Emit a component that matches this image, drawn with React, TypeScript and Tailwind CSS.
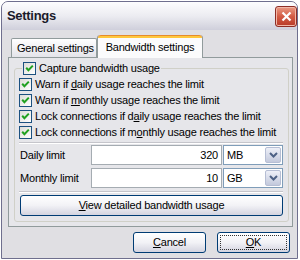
import React from 'react';

// XP-style checkbox (always checked here)
const Check = () => (
  <span className="w-[13px] h-[13px] shrink-0 border border-[#1c5180] bg-gradient-to-br from-[#dcdcd7] to-white flex items-center justify-center">
    <svg width="9" height="9" viewBox="0 0 9 9">
      <path d="M1.2 3.8 L3.4 6.2 L7.8 1.6" stroke="#21a121" strokeWidth="2" fill="none" />
    </svg>
  </span>
);

const CheckRow = ({ children }: { children: React.ReactNode }) => (
  <div className="h-[16px] flex items-center gap-[3px]">
    <Check />
    <span className="leading-[13px]">{children}</span>
  </div>
);

const Combo = ({ value }: { value: string }) => (
  <div className="w-[60px] h-[20px] border border-[#7f9db9] bg-white flex items-center justify-between pl-[3px] pr-[1px]">
    <span>{value}</span>
    <span className="w-[16px] h-[16px] rounded-[2px] border border-[#b6bed4] bg-gradient-to-b from-[#eef0f8] to-[#c3c9dc] flex items-center justify-center">
      <svg width="9" height="6" viewBox="0 0 9 6">
        <path d="M1 1 L4.5 4.5 L8 1" stroke="#4d6185" strokeWidth="2" fill="none" />
      </svg>
    </span>
  </div>
);

const XpButton = ({
  children,
  className = '',
  focused = false,
}: {
  children: React.ReactNode;
  className?: string;
  focused?: boolean;
}) => (
  <button
    type="button"
    className={`h-[21px] rounded-[3px] border border-[#003c74] bg-gradient-to-b from-white via-[#f2f2f6] to-[#d4d4e0] flex items-center justify-center p-[2px] ${className}`}
  >
    <span
      className={`w-full h-full flex items-center justify-center ${focused ? 'border border-dotted border-[#333]' : ''}`}
    >
      {children}
    </span>
  </button>
);

const Separator = () => (
  <div className="mr-[5px] border-t border-[#c5c5cb] border-b border-b-white" />
);

export default function App() {
  return (
    <div className="w-[300px] h-[260px] bg-white pt-[1px] font-['Liberation_Sans',Arial,sans-serif] text-[11px] tracking-[-0.2px] text-black">
      <div className="ml-[1px] w-[297px] h-[258px] flex flex-col rounded-t-[7px] border border-[#6f6f8e] bg-[#e0dfe3] overflow-hidden">
        {/* title bar */}
        <div className="h-[28px] shrink-0 flex items-center justify-between pl-[5px] pr-[0px] bg-gradient-to-b from-[#fdfdfe] via-[#ececf1] to-[#cfcfdb]">
          <span className="text-[13px] font-bold tracking-[-0.3px] text-[#1a1a2a]">Settings</span>
          <span className="w-[22px] h-[21px] rounded-[3px] border border-[#8e2e26] bg-gradient-to-b from-[#e99a84] via-[#d35b44] to-[#b83a28] flex items-center justify-center shadow-[inset_0_0_0_1px_#f2b8a8]">
            <svg width="11" height="11" viewBox="0 0 11 11">
              <path d="M1.5 1.5 L9.5 9.5 M9.5 1.5 L1.5 9.5" stroke="white" strokeWidth="2.2" />
            </svg>
          </span>
        </div>

        {/* client area */}
        <div className="flex-1 flex flex-col pl-[6px] pr-[4px] pt-[5px]">
          {/* tabs */}
          <div className="h-[22px] flex items-end pl-[3px]">
            <div className="w-[86px] h-[19px] rounded-t-[2px] border border-b-0 border-[#919b9c] bg-gradient-to-b from-white to-[#e4e4ea] pl-[5px] flex items-center">
              General settings
            </div>
            <div className="relative z-10 w-[106px] h-[23px] -mb-[1px] rounded-t-[3px] border-x border-[#919b9c] bg-[#fbfbfc] flex flex-col">
              <div className="h-[3px] rounded-t-[3px] bg-[#ffc83c] border-t border-[#e68b2c]" />
              <div className="flex-1 flex items-center justify-center pb-[1px]">Bandwidth settings</div>
            </div>
          </div>

          {/* tab panel */}
          <div className="h-[170px] border border-[#919b9c] bg-[#e6e6ea] pl-[5px] pr-[3px] pt-[2px]">
            <fieldset className="border border-[#d0d0c8] rounded-[3px] pl-[4px] pb-[5px]">
              <legend className="ml-[3px] px-[1px]">
                <CheckRow>Capture bandwidth usage</CheckRow>
              </legend>
              <CheckRow>
                Warn if <u>d</u>aily usage reaches the limit
              </CheckRow>
              <CheckRow>
                Warn if <u>m</u>onthly usage reaches the limit
              </CheckRow>
              <CheckRow>
                Lock connections if d<u>a</u>ily usage reaches the limit
              </CheckRow>
              <CheckRow>
                Lock connections if m<u>o</u>nthly usage reaches the limit
              </CheckRow>

              <div className="mt-[2px]">
                <Separator />
              </div>

              <div className="pl-[1px] mt-[1px] flex flex-col gap-[3px]">
                <div className="flex items-center">
                  <span className="w-[71px]">Daily limit</span>
                  <div className="w-[131px] h-[20px] border border-[#a5acb2] bg-white flex items-center justify-end pr-[3px]">320</div>
                  <div className="ml-[1px]">
                    <Combo value="MB" />
                  </div>
                </div>
                <div className="flex items-center">
                  <span className="w-[71px]">Monthly limit</span>
                  <div className="w-[131px] h-[20px] border border-[#a5acb2] bg-white flex items-center justify-end pr-[3px]">10</div>
                  <div className="ml-[1px]">
                    <Combo value="GB" />
                  </div>
                </div>
              </div>

              <div className="mt-[3px]">
                <Separator />
              </div>

              <div className="pl-[1px] pr-[5px] mt-[2px]">
                <XpButton className="w-full">
                  <span>
                    <u>V</u>iew detailed bandwidth usage
                  </span>
                </XpButton>
              </div>
            </fieldset>
          </div>

          {/* dialog buttons */}
          <div className="mt-[5px] flex justify-end gap-[11px] pr-[3px]">
            <XpButton className="w-[73px]">
              <span>
                <u>C</u>ancel
              </span>
            </XpButton>
            <XpButton className="w-[73px]" focused>
              <span>
                <u>O</u>K
              </span>
            </XpButton>
          </div>
        </div>
      </div>
    </div>
  );
}
